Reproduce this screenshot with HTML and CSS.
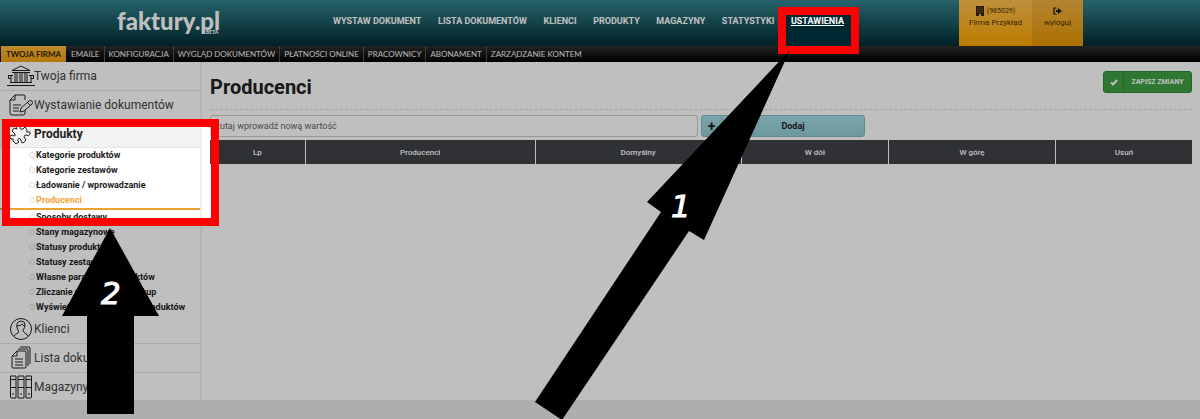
FILE: index.html
```html
<!DOCTYPE html>
<html lang="pl">
<head>
<meta charset="utf-8">
<title>faktury.pl – Producenci</title>
<link rel="stylesheet" href="styles.css">
</head>
<body>
<div class="page">
  <header class="header">
    <a class="logo" href="#">faktury.pl<span class="logo-beta">BETA</span></a>
    <nav class="nav">
      <a href="#">WYSTAW DOKUMENT</a>
      <a href="#">LISTA DOKUMENTÓW</a>
      <a href="#">KLIENCI</a>
      <a href="#">PRODUKTY</a>
      <a href="#">MAGAZYNY</a>
      <a href="#">STATYSTYKI</a>
      <a class="active" href="#">USTAWIENIA</a>
    </nav>
    <div class="account">
      <a class="company" href="#">
        <span class="company-id"><svg width="8" height="10" viewBox="0 0 8 10"><path d="M0 0H8V10H5V8H3V10H0Z" fill="#332300"/><path d="M1.500 2h1M3.500 2h1M5.500 2h1M1.500 4h1M3.500 4h1M5.500 4h1M1.500 6h1M3.500 6h1M5.500 6h1" stroke="#b98a35"/></svg>(985029)</span>
        <span>Firma Przykład</span>
      </a>
      <a class="logout" href="#">
        <svg width="9" height="8" viewBox="0 0 9 8"><path d="M3.500 1H1V7H3.500" fill="none" stroke="#221800" stroke-width="1.200"/><path d="M3 3H5V1L9 4L5 7V5H3Z" fill="#221800"/></svg>
        <span>wyloguj</span>
      </a>
    </div>
  </header>
  <nav class="subnav">
    <a class="active" href="#">TWOJA FIRMA</a>
    <a href="#">EMAILE</a>
    <a href="#">KONFIGURACJA</a>
    <a href="#">WYGLĄD DOKUMENTÓW</a>
    <a href="#">PŁATNOŚCI ONLINE</a>
    <a href="#">PRACOWNICY</a>
    <a href="#">ABONAMENT</a>
    <a href="#">ZARZĄDZANIE KONTEM</a>
  </nav>
  <div class="layout">
    <aside class="sidebar">
      <a class="section" href="#"><svg class="icon" viewBox="0 0 28 24"><path d="M0 21.500H28M3 18.500H25M5 8.500H23M5 6.500L14 2L23 6.500ZM8 9V18M10 9V18M13 9V18M15 9V18M18 9V18M20 9V18M4 12V18M24 12V18M1 11.500H6M22 11.500H27M1.500 11V14.500H4M26.500 11V14.500H24"/></svg>Twoja firma</a>
      <a class="section" href="#"><svg class="icon" viewBox="0 0 28 24"><path d="M18 7V3Q18 2 17 2H8L3 7V20Q3 22 5 22H16Q18 22 18 20V17M8 2V7H3M6 12H14M6 15H12M6 18H12M14 15L22 8Q24 7 25 8Q26 10 25 11L17 18L13 19ZM20 9L23 12"/></svg>Wystawianie dokumentów</a>
      <a class="section current" href="#"><svg class="icon" viewBox="0 0 28 24"><path d="M10 7Q8 3 11 3Q14 3 13 6Q13 8 16 7L18 5L20 8Q19 11 21 10Q24 9 23 12Q22 15 19 13Q17 13 17 15L19 18L16 21Q14 21 14 18Q13 15 11 17Q10 19 12 20L9 22L6 19Q7 16 5 17Q2 17 3 14Q5 12 7 14Q9 14 8 12L5 9L7 6Z"/></svg>Produkty</a>
      <ul class="items">
        <li><a href="#">Kategorie produktów</a></li>
        <li><a href="#">Kategorie zestawów</a></li>
        <li><a href="#">Ładowanie / wprowadzanie</a></li>
        <li class="selected"><a href="#">Producenci</a></li>
        <li><a href="#">Sposoby dostawy</a></li>
        <li><a href="#">Stany magazynowe</a></li>
        <li><a href="#">Statusy produktów</a></li>
        <li><a href="#">Statusy zestawów</a></li>
        <li><a href="#">Własne parametry produktów</a></li>
        <li><a href="#">Zliczanie produktów na zakup</a></li>
        <li><a href="#">Wyświetlanie parametrów produktów</a></li>
      </ul>
      <a class="section" href="#"><svg class="icon" viewBox="0 0 28 24"><circle cx="14" cy="12" r="10.500"/><path d="M7 19Q8 17 11 16Q12 15 11 13Q9 10 10 7Q11 4 14 4Q18 4 18 8Q18 11 16 13Q16 15 18 16Q20 17 21 19M10 9Q14 9 15 7Q16 9 18 9"/></svg>Klienci</a>
      <a class="section" href="#"><svg class="icon" viewBox="0 0 28 24"><path d="M10 5H18Q19 5 19 6V21Q19 22 18 22H6Q5 22 5 21V10ZM10 5V10H5M11 3H20Q21 3 21 4V20M13 1H22Q23 1 23 2V18M8 13H16M8 16H16M8 19H16"/></svg>Lista dokumentów</a>
      <a class="section" href="#"><svg class="icon" viewBox="0 0 28 24"><path d="M3.500 1H9V23H4.500Q3.500 23 3.500 22ZM11 1H17V23H11ZM19 1H24.500V22Q24.500 23 23.500 23H19ZM3 4.500H9M3 12.500H9M11 4.500H17M11 12.500H17M19 4.500H25M19 12.500H25M6 18V20M14 18V20M22 18V20"/></svg>Magazyny</a>
    </aside>
    <main class="content">
      <div class="title-row">
        <h1>Producenci</h1>
        <button class="save" type="button"><span class="button-icon"><svg width="8" height="7" viewBox="0 0 8 7"><path d="M1 3.500L3 5.500L7 1" fill="none" stroke="#fff" stroke-width="2"/></svg></span><span class="button-text">ZAPISZ ZMIANY</span></button>
      </div>
      <form class="add-row">
        <input type="text" aria-label="Nowa wartość" placeholder="tutaj wprowadź nową wartość">
        <button class="add" type="button"><span class="button-icon">+</span><span class="button-text">Dodaj</span></button>
      </form>
      <table class="table">
        <thead><tr><th class="col-lp">Lp</th><th class="col-name">Producenci</th><th class="col-default">Domyślny</th><th class="col-down">W dół</th><th class="col-up">W górę</th><th class="col-delete">Usuń</th></tr></thead>
      </table>
    </main>
  </div>
  <footer class="footer"></footer>
  <svg class="annotations" width="100%" height="100%">
    <path d="M0 0H9999V9999H0ZM782 11V50H855V11ZM6 123V222H215V123Z" fill="#000" fill-opacity=".25" fill-rule="evenodd"/>
    <rect x="782" y="11" width="73" height="39" fill="none" stroke="#f00" stroke-width="8"/>
    <rect x="6" y="123" width="209" height="99" fill="none" stroke="#f00" stroke-width="8"/>
    <path d="M790 50L647 202L661 212L535 402L562 420L689 231L704 240Z"/>
    <path d="M110 228L62 316H87V414H134V316H159Z"/>
    <text class="step" x="671" y="217">1</text>
    <text class="step" x="101" y="304">2</text>
  </svg>
</div>
</body>
</html>
```
FILE: styles.css
```css
* { box-sizing: border-box; }
body { margin: 0; font-family: Roboto, "Liberation Sans", sans-serif; color: #222; }
a { color: inherit; text-decoration: none; }
button, input { font-family: inherit; }

.page { position: relative; display: flex; flex-direction: column; min-height: 100vh; overflow: hidden; background: #fff; }

.header { display: flex; height: 46px; padding: 0 117px; background: linear-gradient(#34858f, #002b32); }
.logo { display: grid; align-content: start; width: 103px; padding-top: 7px; color: #fff; font: 900 24px/28px Lato, sans-serif; }
.logo-beta { justify-self: end; margin: -6px 2px 0 0; font-size: 5px; line-height: 6px; }
.nav { display: flex; flex: 1; justify-content: space-between; margin: 0 115px 0 113px; color: #fff; font-size: 9px; font-weight: 700; line-height: 27px; white-space: nowrap; }
.nav a { margin-top: 8px; }
.nav .active { margin-left: -9px; margin-right: -9px; padding: 0 9px; background: #002830; text-decoration: underline; }
.account { display: flex; color: #4a3200; font-size: 8px; line-height: 12px; text-align: center; }
.account a { display: flex; flex-direction: column; align-items: center; padding-top: 5px; }
.company { width: 73px; background: linear-gradient(#fdc153, #fda500); }
.company-id { display: flex; align-items: center; gap: 3px; font-size: 7px; }
.logout { width: 51px; background: linear-gradient(#f0b146, #e69700); }
.logout svg { margin: 2px 0; }

.subnav { display: flex; height: 16px; padding-left: 1px; background: linear-gradient(#303030, #000); color: #f0f0f0; font: 400 8px/16px Lato, sans-serif; white-space: nowrap; }
.subnav a { padding: 0 4px; border-right: 1px solid #555; }
.subnav a:last-child { border-right: 0; }
.subnav .active { margin-right: 1px; padding: 0 5px; border-right: 0; background: linear-gradient(#ffb93c, #f0a010); color: #332200; font-weight: 700; }

.layout { display: flex; min-height: 338px; }
.sidebar { width: 202px; border-right: 2px solid #f0f0f0; }
.section { display: flex; align-items: center; height: 29px; padding-left: 7px; border-bottom: 1px solid #e4e4e4; color: #444; font-size: 12px; }
.section:last-child { height: 27px; border-bottom: 0; }
.section.current { height: 28px; background: #f2f2f2; color: #222; font-weight: 700; }
.icon { width: 28px; height: 24px; margin-right: -1px; fill: none; stroke: #222; stroke-width: 1; }
.items { margin: 0; padding: 0; list-style: none; font-size: 9px; font-weight: 700; line-height: 15px; white-space: nowrap; }
.items li { height: 15px; padding-left: 29px; }
.items li::before { content: ""; display: inline-block; width: 4px; height: 4px; margin-right: 1px; border: 1px solid #ddd; border-radius: 50%; }
.items .selected { height: 17px; border-bottom: 2px solid #f0a030; color: #f5a33a; }

.content { flex: 1; padding: 9px 8px 0; }
.title-row { display: flex; align-items: flex-start; justify-content: space-between; height: 39px; border-bottom: 1px dashed #ddd; }
h1 { margin: 2px 0 0; font-size: 20px; line-height: 28px; }
button { display: flex; padding: 0; border-radius: 3px; }
.button-icon { display: flex; align-items: center; justify-content: center; width: 20px; border-right: 1px solid #0002; }
.button-text { flex: 1; text-align: center; }
.save { width: 89px; height: 22px; border: 1px solid #2d8a35; background: #3f9f45; color: #fff; font-size: 7px; font-weight: 700; line-height: 20px; }
.add-row { display: flex; gap: 3px; padding: 5px 0 3px; }
.add-row input { width: 488px; height: 22px; padding: 0 6px; border: 1px solid #ccc; border-radius: 3px; background: #fff; font-size: 9px; }
.add-row input::placeholder { color: #666; }
.add { width: 164px; height: 22px; border: 1px solid #7dbcc4; background: linear-gradient(#a2dbe2, #92ccd4); color: #222; font-size: 9px; font-weight: 700; line-height: 20px; }
.add .button-icon { font-size: 14px; }
.table { width: 100%; table-layout: fixed; border-collapse: collapse; }
.table th { height: 24px; padding: 0; border-left: 1px solid #fff; background: #404247; color: #fff; font-size: 8px; font-weight: 500; }
.table th:first-child { border-left: 0; }
.col-lp { width: 9.7%; }
.col-name { width: 23.4%; }
.col-default { width: 21%; }
.col-down { width: 15%; }
.col-up { width: 17%; }
.col-delete { width: 13.9%; }

.footer { flex: 1; min-height: 19px; background: #e8e8e8; }

.annotations { position: absolute; inset: 0; pointer-events: none; }
.step { fill: #fff; font: italic 31px "DejaVu Sans", sans-serif; stroke: #fff; }
```
